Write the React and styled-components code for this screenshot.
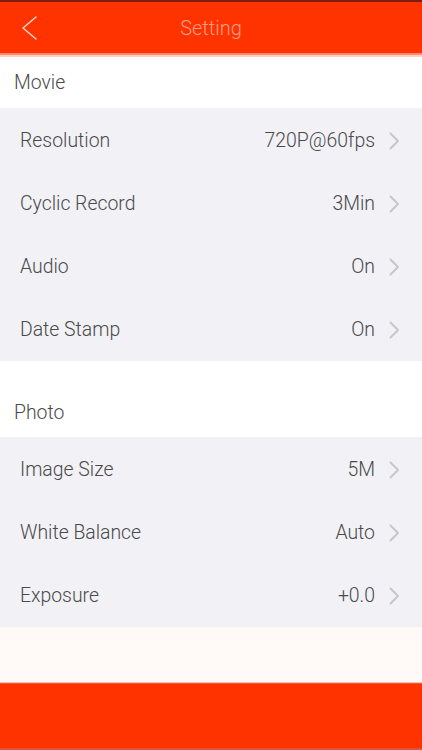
import React from "react";
import styled, { createGlobalStyle } from "styled-components";

const Global = createGlobalStyle`
  html, body { margin: 0; padding: 0; background: #fff; }
  body { font-family: Roboto, "Liberation Sans", Arial, sans-serif; }
`;

const Page = styled.div`
  width: 422px;
  height: 750px;
  display: flex;
  flex-direction: column;
  background: #fff;
  overflow: hidden;
`;

const Header = styled.header`
  height: 51px;
  flex: none;
  background: #ff3300;
  border-top: 2px solid #7a1f10;
  border-bottom: 2px solid #ff8a6e;
  display: grid;
  grid-template-columns: 60px 1fr 60px;
  align-items: center;
  margin-bottom: 2px;
  position: relative;
  &::after {
    content: "";
    position: absolute;
    left: 0; right: 0; bottom: -4px;
    height: 2px;
    background: #ffd0c2;
  }
`;

const BackButton = styled.button`
  border: 0;
  background: transparent;
  padding: 0 0 0 20px;
  height: 100%;
  display: flex;
  align-items: center;
  cursor: pointer;
`;

const Title = styled.h1`
  margin: 0;
  text-align: center;
  font-size: 20px;
  font-weight: 300;
  color: #ff9f86;
`;

const SectionTitle = styled.div`
  height: ${(p) => p.$h}px;
  flex: none;
  background: #fff;
  display: flex;
  align-items: flex-end;
  padding: 0 0 ${(p) => p.$pb}px 14px;
  box-sizing: border-box;
  font-size: 19.4px;
  font-weight: 300;
  color: #4a4a4a;
`;

const List = styled.div`
  background: #f1f1f6;
  display: flex;
  flex-direction: column;
  flex: none;
  padding-bottom: 1px;
`;

const Row = styled.div`
  height: 63px;
  box-sizing: border-box;
  padding: 2px 22px 0 20px;
  display: flex;
  align-items: center;
  font-size: 19.4px;
  font-weight: 300;
  color: #4a4a4a;
`;

const Label = styled.span`
  flex: 1;
`;

const Value = styled.span`
  margin-right: 14px;
`;

const Footer = styled.div`
  flex: 1;
  display: flex;
  flex-direction: column;
`;

const Spacer = styled.div`
  height: 55px;
  background: #fffaf8;
  border-bottom: 1px solid #f3c3b6;
`;

const BottomBar = styled.div`
  flex: 1;
  background: #ff3300;
  border-top: 1px solid #f25a3c;
  border-bottom: 2px solid #e0533a;
`;

const Chevron = () => (
  <svg width="11" height="18" viewBox="0 0 11 18" fill="none">
    <path d="M1.5 1.5 L9 9 L1.5 16.5" stroke="#c4c4c9" strokeWidth="1.8" strokeLinecap="round" strokeLinejoin="round" />
  </svg>
);

const BackIcon = () => (
  <svg width="18" height="24" viewBox="0 0 18 24" fill="none">
    <path d="M16 1 L3 12 L16 23" stroke="#ffd6c9" strokeWidth="1.5" strokeLinecap="round" strokeLinejoin="round" />
  </svg>
);

const movie = [
  ["Resolution", "720P@60fps"],
  ["Cyclic Record", "3Min"],
  ["Audio", "On"],
  ["Date Stamp", "On"],
];

const photo = [
  ["Image Size", "5M"],
  ["White Balance", "Auto"],
  ["Exposure", "+0.0"],
];

const SettingRow = ({ label, value }) => (
  <Row>
    <Label>{label}</Label>
    <Value>{value}</Value>
    <Chevron />
  </Row>
);

export default function App() {
  return (
    <Page>
      <Global />
      <Header>
        <BackButton aria-label="back"><BackIcon /></BackButton>
        <Title>Setting</Title>
        <span />
      </Header>
      <SectionTitle $h={51} $pb={14}>Movie</SectionTitle>
      <List>
        {movie.map(([l, v]) => <SettingRow key={l} label={l} value={v} />)}
      </List>
      <SectionTitle $h={76} $pb={13}>Photo</SectionTitle>
      <List>
        {photo.map(([l, v]) => <SettingRow key={l} label={l} value={v} />)}
      </List>
      <Footer>
        <Spacer />
        <BottomBar />
      </Footer>
    </Page>
  );
}
